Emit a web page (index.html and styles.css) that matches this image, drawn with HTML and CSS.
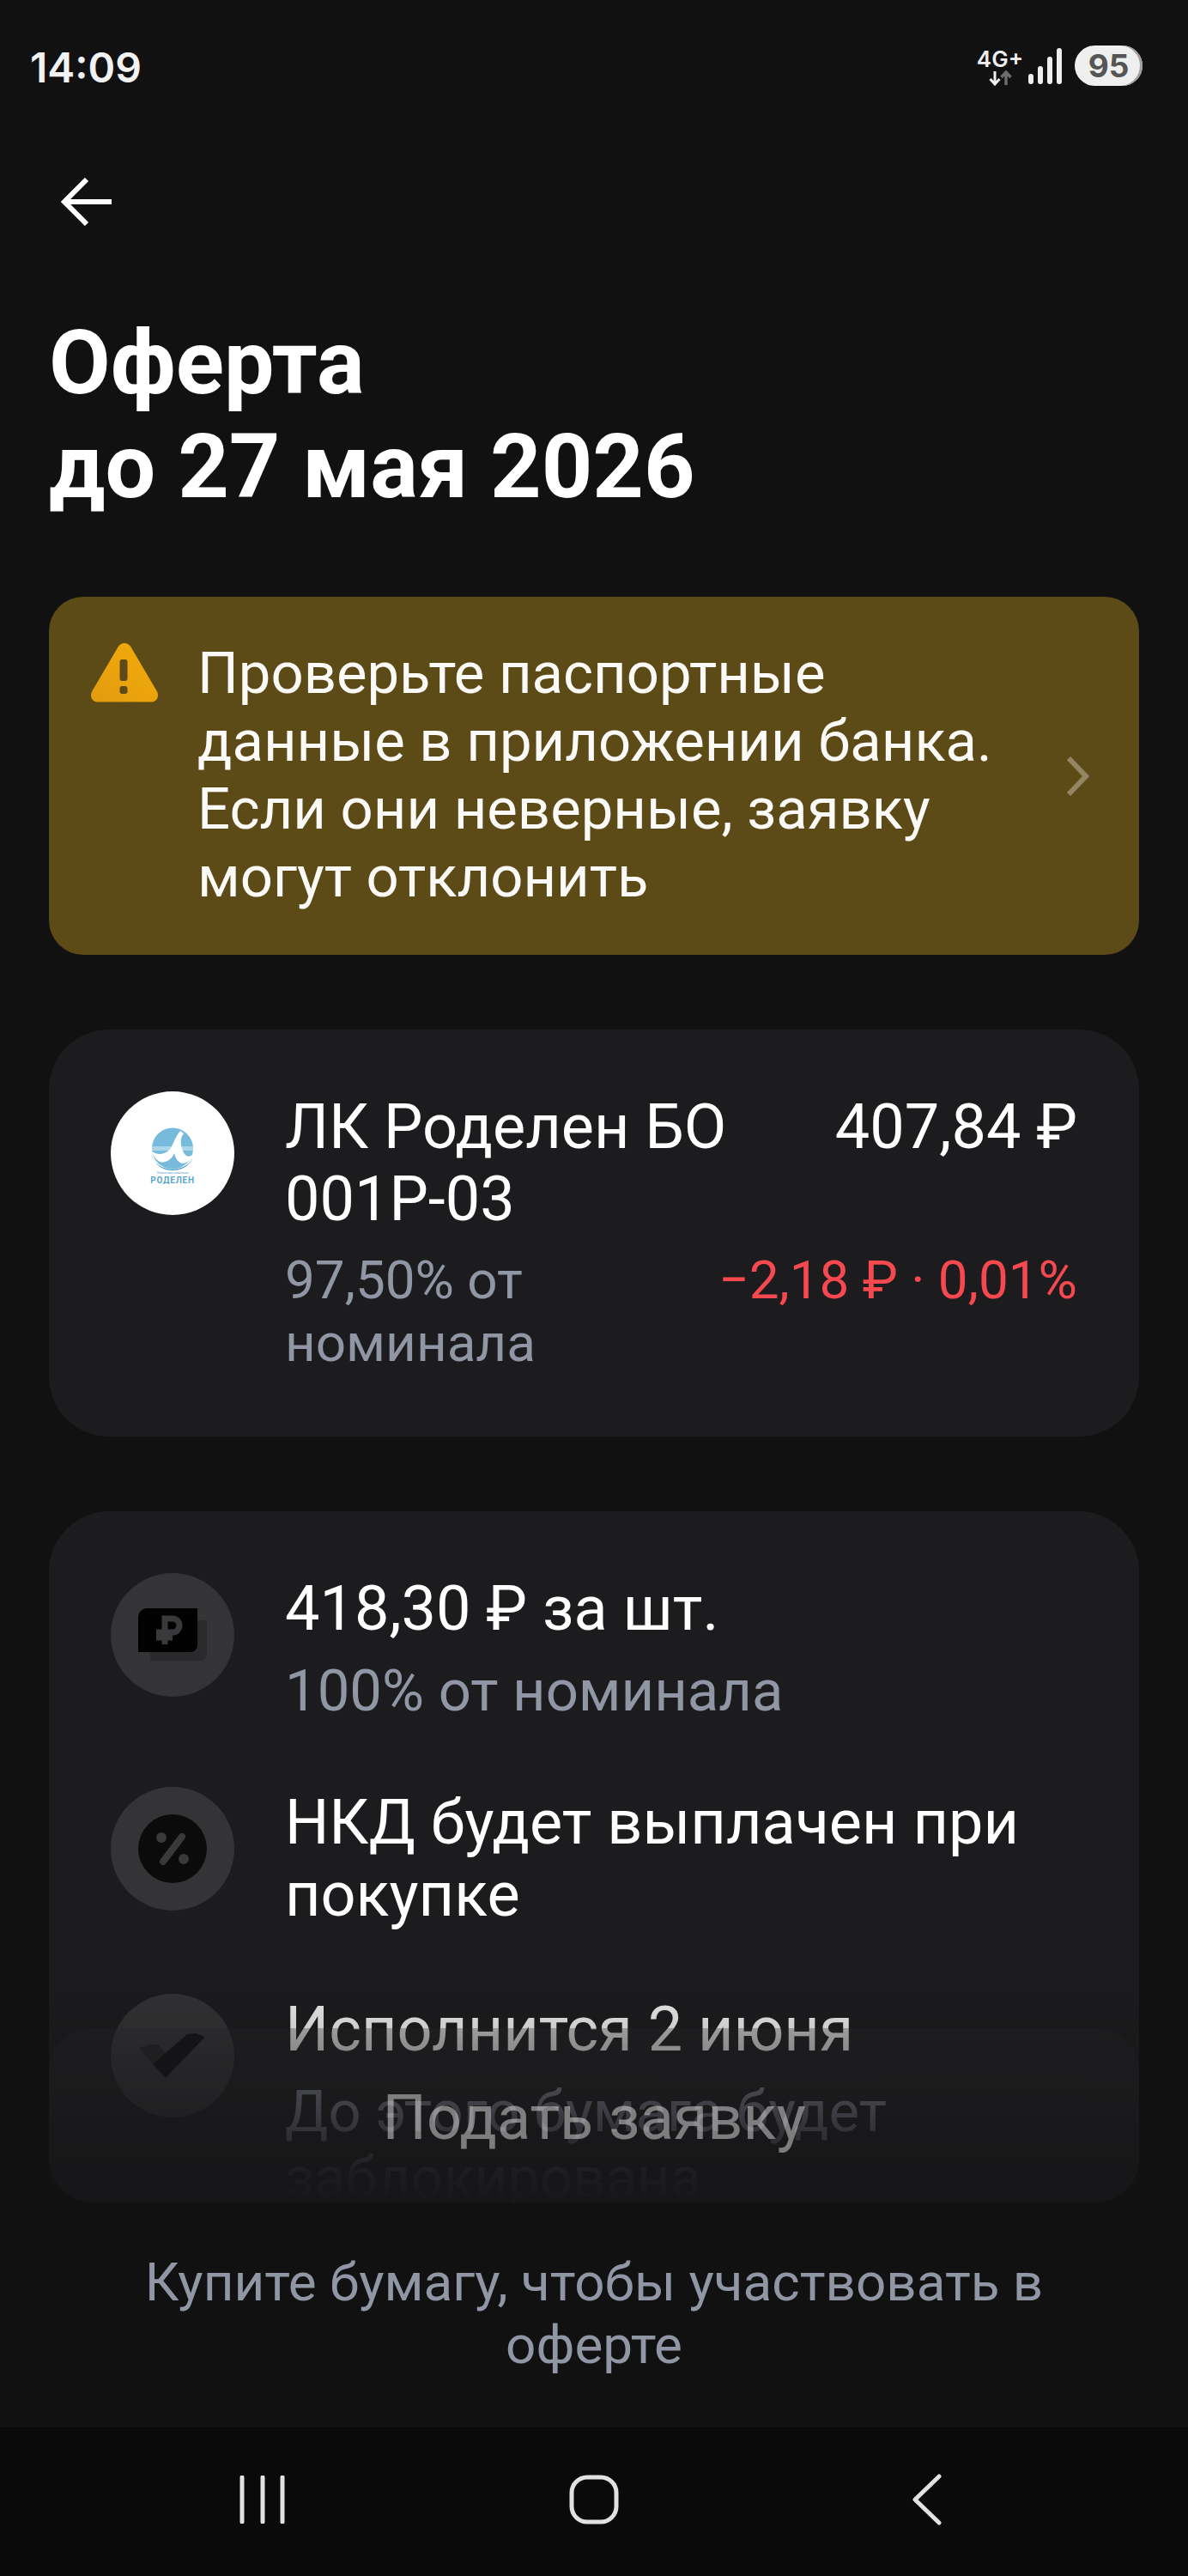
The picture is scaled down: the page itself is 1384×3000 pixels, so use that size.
FILE: index.html
```html
<!DOCTYPE html>
<html lang="ru">
<head>
<meta charset="utf-8">
<title>Оферта</title>
<link rel="stylesheet" href="styles.css">
</head>
<body>
<div class="screen">
  <div class="status">
    <span class="time">14:09</span>
    <div class="status-right">
      <div class="net">
        <span class="net-label">4G+</span>
        <svg class="net-arrows" width="30" height="18" viewBox="0 0 30 18"><path d="M9 1v14M3.500 10 9 16l5.500-6" fill="none" stroke="#eee" stroke-width="3"/><path d="M22 17V3M16.500 8 22 2l5.500 6" fill="none" stroke="#6c6c6c" stroke-width="3.500"/></svg>
      </div>
      <svg class="signal" width="40" height="42" viewBox="0 0 40 42"><g fill="#eee"><rect x="0" y="30" width="6" height="12" rx="3"/><rect x="11" y="21" width="6" height="21" rx="3"/><rect x="22" y="10" width="6" height="32" rx="3"/><rect x="33" y="0" width="6" height="42" rx="3"/></g></svg>
      <span class="battery">95</span>
    </div>
  </div>

  <div class="topbar">
    <svg class="back" width="60" height="56" viewBox="0 0 60 56"><path d="M59 28H5M30 2 4 28l26 26" fill="none" stroke="#fff" stroke-width="6"/></svg>
  </div>

  <main class="content">
    <h1 class="title">Оферта<br>до 27 мая 2026</h1>

    <section class="notice">
      <svg class="notice-icon" width="82" height="70" viewBox="0 0 82 70"><defs><linearGradient id="warn" x1="0" y1="1" x2="1" y2="0"><stop offset="0" stop-color="#e39b10"/><stop offset="1" stop-color="#f3ac08"/></linearGradient></defs><path d="M33.500 5.500c3.500-6 11.500-6 15 0l30 51c3.500 6 .500 13-6.500 13H10c-7 0-10-7-6.500-13z" fill="url(#warn)"/><rect x="35.500" y="20" width="9" height="25" rx="3" fill="#5c4a17"/><rect x="35.500" y="51" width="9" height="9" rx="3" fill="#5c4a17"/></svg>
      <p class="notice-text">Проверьте паспортные<br>данные в приложении банка.<br>Если они неверные, заявку<br>могут отклонить</p>
      <svg class="notice-chevron" width="30" height="48" viewBox="0 0 30 48"><path d="M5 3l20 21L5 45" fill="none" stroke="#948660" stroke-width="6"/></svg>
    </section>

    <section class="card bond">
      <div class="logo">
        <svg width="54" height="66" viewBox="0 0 54 66"><circle cx="27" cy="24.500" r="24" fill="#76bbdb"/><path d="M3 22h48v5H3z" fill="#a9d6e9"/><path d="M3 28C12 34 22 30 26 22 29 16 31 10 36 4l4 3c-4 5-4 11-2 17 2 8 6 12 12 8-2 8-8 10-12 10-6-2-8-8-9-12-3 8-11 12-17 10-4-2-8-8-9-12z" fill="#fff"/><path d="M2 30c4 25 46 25 50 0-2 12-11 20-25 20S5 42 2 30z" fill="#4e9cc2"/><text class="logo-small" x="27" y="54" text-anchor="middle">Лизинговая компания</text><text class="logo-name" x="27" y="65" text-anchor="middle">РОДЕЛЕН</text></svg>
      </div>
      <div class="bond-body">
        <div class="bond-top">
          <span class="row-title bond-name">ЛК Роделен БО 001Р-03</span>
          <span class="row-title">407,84 ₽</span>
        </div>
        <div class="bond-bottom">
          <span class="row-sub bond-sub">97,50% от номинала</span>
          <span class="row-sub negative">−2,18 ₽ · 0,01%</span>
        </div>
      </div>
    </section>

    <section class="card terms">
      <div class="term">
        <div class="term-icon">
          <svg width="80" height="62" viewBox="0 0 80 62"><path d="M14 14h66v40a7 7 0 0 1-7 7H14z" fill="#2a2a2c"/><path d="M10 0h59v43a8 8 0 0 1-8 8H0V10A10 10 0 0 1 10 0z" fill="#010101"/><path d="M31 42V12h9a8 8 0 0 1 0 16H21M21 34h19" fill="none" stroke="#39393b" stroke-width="7"/></svg>
        </div>
        <div class="term-text">
          <span class="row-title">418,30 ₽ за шт.</span>
          <span class="row-sub term-sub">100% от номинала</span>
        </div>
      </div>
      <div class="term">
        <div class="term-icon">
          <svg width="80" height="80" viewBox="0 0 80 80"><circle cx="40" cy="40" r="40" fill="#0b0b0c"/><circle cx="27" cy="27" r="6" fill="#39393b"/><circle cx="53" cy="52" r="6" fill="#39393b"/><path d="M29 55l22-29" stroke="#39393b" stroke-width="8" stroke-linecap="round"/></svg>
        </div>
        <div class="term-text">
          <span class="row-title">НКД будет выплачен при покупке</span>
        </div>
      </div>
      <div class="term">
        <div class="term-icon">
          <svg width="78" height="53" viewBox="0 0 78 53"><path d="M0 17 11 13H23L31 24 16 36z" fill="#232325"/><path d="M16 36 56 1 66 0 77 4 31 52z" fill="#0d0d0e"/></svg>
        </div>
        <div class="term-text">
          <span class="row-title">Исполнится 2 июня</span>
          <span class="row-sub term-sub">До этого бумага будет заблокирована</span>
        </div>
      </div>
    </section>

    <div class="action">
      <button class="submit">Подать заявку</button>
      <p class="action-hint">Купите бумагу, чтобы участвовать в оферте</p>
    </div>
  </main>

  <nav class="navbar">
    <svg width="56" height="56" viewBox="0 0 56 56"><path d="M4 2v52M28 2v52M51 2v52" stroke="#e2e2e2" stroke-width="5" stroke-linecap="round"/></svg>
    <svg class="nav-home" width="58" height="58" viewBox="0 0 58 58"><rect x="3" y="3" width="52" height="52" rx="18" fill="none" stroke="#e2e2e2" stroke-width="5"/></svg>
    <svg width="36" height="60" viewBox="0 0 36 60"><path d="M32 3 4 30l28 27" fill="none" stroke="#e2e2e2" stroke-width="5" stroke-linecap="round" stroke-linejoin="round"/></svg>
  </nav>
</div>
</body>
</html>
```

FILE: styles.css
```css
* { box-sizing: border-box; }
html, body { margin: 0; background: #111112; }
body { font-family: Roboto, "Noto Sans", sans-serif; color: #fff; }
.screen { width: 1384px; height: 3000px; display: flex; flex-direction: column; overflow: hidden; }

.status { height: 157px; flex: none; display: flex; justify-content: space-between; align-items: flex-start; padding: 53px 53px 0 35px; }
.time { font-family: Inter, Roboto, sans-serif; font-size: 48px; line-height: 52px; font-weight: 600; color: #f2f2f2; }
.status-right { display: flex; align-items: center; gap: 14px; }
.net { display: flex; flex-direction: column; align-items: center; width: 52px; margin: 3px -7px 0 0; }
.net-label { font-family: Inter, Roboto, sans-serif; font-size: 26px; line-height: 26px; font-weight: 600; color: #eee; }
.signal { display: block; }
.battery { width: 79px; height: 47px; border-radius: 24px; background: #efefef; box-shadow: inset -3px 0 0 #a0a0a0; color: #555; font-family: Inter, Roboto, sans-serif; font-size: 37px; font-weight: 700; line-height: 47px; text-align: center; }

.topbar { height: 158px; flex: none; padding: 50px 0 0 71px; }
.back { display: block; }

.content { flex: 1; position: relative; overflow: hidden; padding: 47px 57px 0; }
.title { margin: 0 0 91px; font-size: 104px; line-height: 121px; font-weight: 700; color: #fff; }

.notice { display: flex; align-items: center; height: 417px; border-radius: 40px; background: #5c4a17; padding: 0 57px 0 47px; }
.notice-icon { align-self: flex-start; margin-top: 53px; flex: none; }
.notice-text { margin: -1px 0 0 44px; flex: 1; font-size: 67px; line-height: 79px; color: #fbfaf7; }
.notice-chevron { flex: none; }

.card { margin-top: 87px; background: #1c1c1e; border-radius: 70px; padding: 72px 72px 73px; }
.bond { display: flex; gap: 59px; }
.logo { width: 144px; height: 144px; flex: none; border-radius: 50%; background: #fff; display: flex; align-items: center; justify-content: center; padding-top: 6px; }
.logo-small { font-size: 3.500px; font-family: Roboto, sans-serif; fill: #5ba7cb; }
.logo-name { font-size: 10px; font-weight: 700; font-family: Roboto, sans-serif; fill: #5ba7cb; letter-spacing: .8px; }
.bond-body { flex: 1; min-width: 0; display: flex; flex-direction: column; gap: 15px; }
.bond-top, .bond-bottom { display: flex; justify-content: space-between; gap: 40px; }
.bond-name { width: 560px; }
.bond-sub { width: 400px; }
.row-title { display: block; font-size: 72px; line-height: 84px; color: #fff; }
.row-sub { display: block; font-size: 62px; line-height: 73px; color: #9096a3; }
.term-sub { font-size: 67px; line-height: 77px; }
.negative { color: #f5484f; white-space: nowrap; }

.terms { display: flex; flex-direction: column; gap: 73px; height: 1400px; }
.term { display: flex; gap: 59px; }
.term-icon { width: 144px; height: 144px; flex: none; border-radius: 50%; background: #343436; display: flex; align-items: center; justify-content: center; }
.term-text { display: flex; flex-direction: column; gap: 15px; flex: 1; }

.action { position: absolute; left: 0; right: 0; bottom: 0; height: 560px; padding: 95px 57px 0; background: linear-gradient(to bottom, rgba(17,17,18,0) 0, rgba(17,17,18,.22) 18%, rgba(17,17,18,.58) 34%, rgba(17,17,18,.93) 47%, #111112 54%); }
.submit { display: block; width: 100%; height: 203px; border: 0; border-radius: 50px; background: rgba(38,38,40,.3); color: rgba(255,255,255,.44); font: 400 72px/1 Roboto, sans-serif; padding: 6px 0 0; }
.action-hint { margin: 56px 100px 0; font-size: 62px; line-height: 73px; text-align: center; color: #9096a3; }

.navbar { height: 173px; flex: none; background: #0a0a0b; display: flex; align-items: center; justify-content: space-between; padding: 0 286px 6px 278px; }
.nav-home { margin-right: 12px; }
```
